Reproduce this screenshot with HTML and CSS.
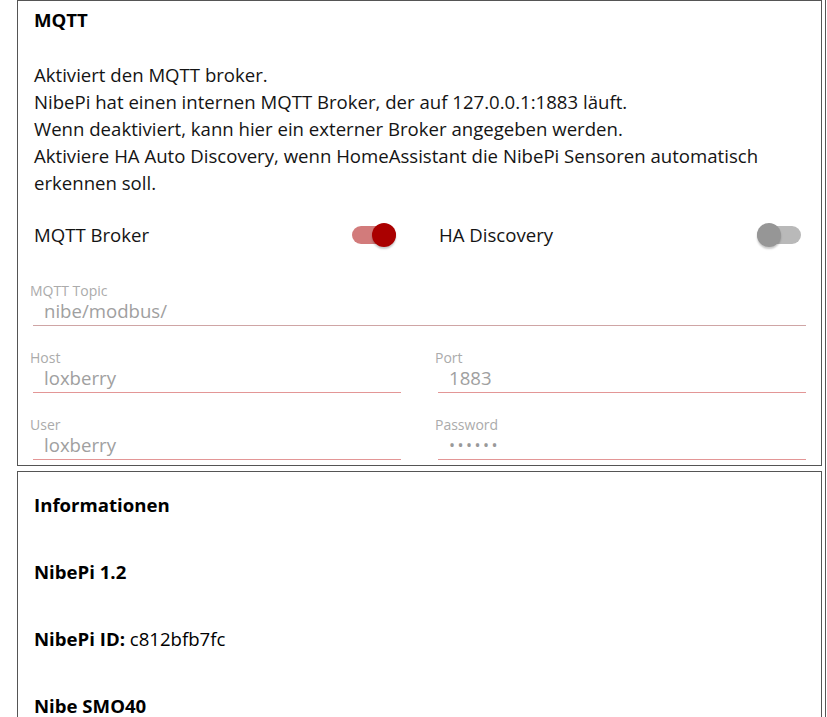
FILE: index.html
```html
<!DOCTYPE html>
<html lang="de">
<head>
  <meta charset="UTF-8" />
  <meta name="viewport" content="width=device-width, initial-scale=1.0"/>
  <title>NibePi Einstellungen</title>
  <link rel="stylesheet" href="styles.css">
</head>
<body>
  <div class="page">
    <section class="card">
      <h3 class="card-title">MQTT</h3>
      <p class="card-text">Aktiviert den MQTT broker.<br>NibePi hat einen internen MQTT Broker, der auf 127.0.0.1:1883 läuft.<br>Wenn deaktiviert, kann hier ein externer Broker angegeben werden.<br>Aktiviere HA Auto Discovery, wenn HomeAssistant die NibePi Sensoren automatisch erkennen soll.</p>

      <div class="row switches">
        <div class="switch-field">
          <span>MQTT Broker</span>
          <span class="switch on"><span class="track"></span><span class="knob"></span></span>
        </div>
        <div class="switch-field">
          <span>HA Discovery</span>
          <span class="switch"><span class="track"></span><span class="knob"></span></span>
        </div>
      </div>

      <div class="field topic">
        <label for="topic">MQTT Topic</label>
        <div class="input-line"><input type="text" id="topic" value="nibe/modbus/" disabled /></div>
      </div>

      <div class="row">
        <div class="field">
          <label for="host">Host</label>
          <div class="input-line"><input type="text" id="host" value="loxberry" disabled /></div>
        </div>
        <div class="field">
          <label for="port">Port</label>
          <div class="input-line"><input type="text" id="port" value="1883" disabled /></div>
        </div>
      </div>

      <div class="row">
        <div class="field">
          <label for="user">User</label>
          <div class="input-line"><input type="text" id="user" value="loxberry" disabled /></div>
        </div>
        <div class="field">
          <label for="password">Password</label>
          <div class="input-line"><input type="password" id="password" value="secret" disabled /></div>
        </div>
      </div>
    </section>

    <section class="card info">
      <h3 class="info-item">Informationen</h3>
      <h3 class="info-item">NibePi 1.2</h3>
      <p class="info-item"><b>NibePi ID:</b> c812bfb7fc</p>
      <h3 class="info-item">Nibe SMO40</h3>
    </section>
  </div>
</body>
</html>
```

FILE: styles.css
```css
* {
  margin: 0;
  padding: 0;
  box-sizing: border-box;
}

body {
  font-family: 'Open Sans', 'Noto Sans', sans-serif;
  font-size: 18.6px;
  line-height: 27px;
  color: #141414;
  background: #fff;
  overflow: hidden;
}

.page {
  width: 826px;
  min-height: 100vh;
  padding: 0 3px 0 17px;
  border-right: 1px solid #555;
}

.card {
  border: 1px solid #555;
  padding: 0 15px 5px 15px;
  margin-bottom: 5px;
}

.card-title {
  font-size: 18.6px;
  font-weight: 700;
  margin-top: 5px;
  padding-left: 1px;
  color: #000;
}

.card-text {
  margin-top: 28px;
  padding-left: 1px;
}

.row {
  display: grid;
  grid-template-columns: 1fr 1fr;
  column-gap: 37px;
}

.switches {
  margin-top: 25px;
}

.switch-field {
  display: flex;
  justify-content: space-between;
  align-items: center;
  height: 27px;
  padding-left: 1px;
  padding-right: 5px;
}

.switch {
  position: relative;
  width: 44px;
  height: 24px;
}

.switch .track {
  position: absolute;
  left: 0;
  top: 3px;
  width: 44px;
  height: 18px;
  border-radius: 9px;
  background: #b9b9b9;
}

.switch .knob {
  position: absolute;
  left: 0;
  top: 0;
  width: 24px;
  height: 24px;
  border-radius: 50%;
  background: #969696;
  box-shadow: 0 2px 2px rgba(0, 0, 0, 0.22);
}

.switch.on .track {
  background: #d27b7b;
}

.switch.on .knob {
  left: 20px;
  background: #aa0000;
}

.field {
  margin-top: 24px;
}

.field.topic {
  margin-top: 35px;
}

.field label {
  display: block;
  font-size: 14px;
  line-height: 16px;
  color: #ababab;
  margin-left: -3px;
}

.input-line {
  height: 27px;
  border-bottom: 1px solid #e39696;
}

.field.topic .input-line {
  border-bottom-color: #cfa5a5;
}

.input-line input {
  display: block;
  width: 100%;
  height: 26px;
  padding: 0 11px 4px 11px;
  border: none;
  background: transparent;
  font-family: inherit;
  font-size: 18.6px;
  color: #a0a0a0;
  outline: none;
}

.input-line input[type="password"] {
  font-size: 16px;
  letter-spacing: 2.5px;
  padding-bottom: 3px;
  color: #999;
}

.info {
  padding-top: 0;
  padding-bottom: 0;
}

.info-item {
  font-size: 18.6px;
  padding: 19px 0 21px 1px;
  color: #000;
}

.info-item b {
  font-weight: 700;
}

p.info-item {
  font-weight: 400;
}
```
